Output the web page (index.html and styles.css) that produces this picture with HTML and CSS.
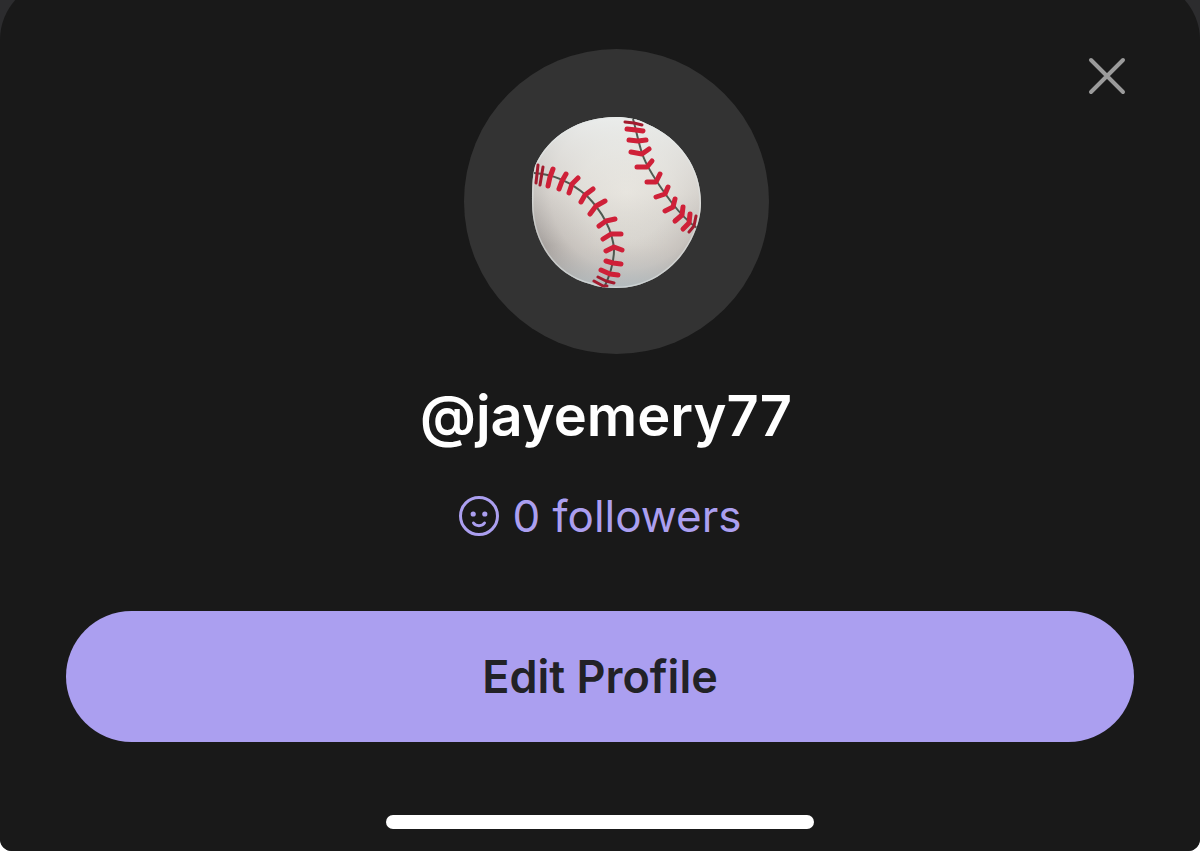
FILE: index.html
```html
<!DOCTYPE html>
<html lang="en">
<head>
    <title>@jayemery77</title>
    <meta charset="UTF-8">
    <meta name="viewport" content="width=device-width, initial-scale=1.0">
    <link rel="stylesheet" href="styles.css">
</head>

<body>
    <div class="backdrop">
        <main class="sheet">
            <button type="button" class="close" aria-label="Close">
                <svg width="40" height="40" viewBox="0 0 40 40" aria-hidden="true">
                    <path d="M4 4l32 32M36 4L4 36" />
                </svg>
            </button>

            <div class="avatar">
                <svg class="ball" viewBox="2 2 190 190" role="img" aria-label="Baseball">
                    <defs>
                        <radialGradient id="leather" cx="0.56" cy="0.44" r="0.6">
                            <stop offset="0" stop-color="#e6e3dc" />
                            <stop offset="0.45" stop-color="#dad7d1" />
                            <stop offset="0.75" stop-color="#c8c3be" />
                            <stop offset="1" stop-color="#a39e9b" />
                        </radialGradient>
                        <linearGradient id="shine" x1="0" y1="0" x2="0" y2="1">
                            <stop offset="0" stop-color="#eef1f0" stop-opacity="0.9" />
                            <stop offset="0.45" stop-color="#e9e7e2" stop-opacity="0.4" />
                            <stop offset="0.75" stop-color="#c8c5c2" stop-opacity="0" />
                            <stop offset="1" stop-color="#b4c0c5" stop-opacity="0.8" />
                        </linearGradient>
                        <clipPath id="ball-shape">
                            <path id="outline" d="M97 12C108 12 119 14 128 19C161 33 182 63 182 98C182 109 179 120 175 129C161 162 131 183 97 183C88 183 79 182 71 179C35 170 13 136 13 98C13 85 13 73 16 61C29 31 60 12 97 12Z" />
                        </clipPath>
                    </defs>
                    <use href="#outline" fill="url(#leather)" />
                    <use href="#outline" fill="url(#shine)" />
                    <g clip-path="url(#ball-shape)">
                        <use href="#outline" class="rim" />
                        <path class="seam" d="M15 68C36 69 54 79 68 91C82 105 94 125 95 145C95 158 91 170 85 183" />
                        <path class="seam" d="M114 14C117 24 119 36 123 48C128 64 141 82 153 98C160 107 168 116 178 123" />
                        <path class="stitch thin" d="M17 78L19 60M21 80L24 62M106 17L115 18L123 20M170 127L175 121L177 111M79 172L87 176L95 178M75 176L84 181L88 181" />
                        <path class="stitch" d="M29 81L31 72L34 64M40 84L43 76L47 69M50 88L53 79L59 73M62 97L66 90L74 84M71 109L77 101L86 96M80 121L87 116L96 114M84 134L92 129L102 129M87 146L95 142L103 145M87 156L94 158L102 159M82 165L91 169L99 170" />
                        <path class="stitch" d="M108 24L117 25L124 26M110 35L119 36L127 35M112 47L123 49L130 44M118 62L128 62L133 56M128 77L137 77L141 69M137 92L146 89L149 82M146 106L154 102L156 94M156 116L163 110L164 102M164 124L170 118L171 109" />
                    </g>
                </svg>
            </div>

            <h1 class="username">@jayemery77</h1>

            <a href="#followers" class="followers">
                <svg width="42" height="42" viewBox="0 0 42 42" aria-hidden="true">
                    <circle class="line" cx="21" cy="21" r="18.5" />
                    <circle class="eye" cx="15.2" cy="19" r="2.6" />
                    <circle class="eye" cx="26.8" cy="19" r="2.6" />
                    <path class="line" d="M15.5 28C18 31.5 24 31.5 26.5 28" />
                </svg>
                0 followers
            </a>

            <button type="button" class="edit">Edit Profile</button>
            <div class="home-indicator"></div>
        </main>
    </div>
</body>
</html>
```
FILE: styles.css
```css
:root {
    --sheet: #191919;
    --backdrop: #2c2c2e;
    --accent: #ab9ff0;
}

* {
    box-sizing: border-box;
}

body {
    margin: 0;
    background: white;
    font-family: Inter, sans-serif;
}

.backdrop {
    min-height: 100vh;
    background: var(--backdrop);
    border-radius: 0 0 12px 12px;
    overflow: hidden;
    display: flex;
}

/* the rounded top runs a little past the window edge */
.sheet {
    position: relative;
    flex: 1;
    margin-top: -20px;
    padding: 69px 66px 22px;
    background: var(--sheet);
    border-radius: 60px 60px 0 0;
    display: flex;
    flex-direction: column;
    align-items: center;
}

.close {
    position: absolute;
    top: 76px;
    right: 73px;
    padding: 0;
    border: none;
    background: none;
    cursor: pointer;
}

.close svg {
    display: block;
    fill: none;
    stroke: #9b9b9b;
    stroke-width: 4;
    stroke-linecap: round;
}

.avatar {
    width: 305px;
    height: 305px;
    margin-left: 32px;
    border-radius: 50%;
    background: #333333;
    display: flex;
    align-items: center;
    justify-content: center;
}

.ball {
    width: 190px;
    height: 190px;
}

.rim {
    fill: none;
    stroke: #e4e9ea;
    stroke-opacity: 0.5;
    stroke-width: 3;
}

.seam {
    fill: none;
    stroke: #2c3a30;
    stroke-width: 2;
    stroke-opacity: 0.8;
}

.stitch {
    fill: none;
    stroke: #cf2038;
    stroke-width: 5;
    stroke-linecap: round;
    stroke-linejoin: round;
}

.stitch.thin {
    stroke: #a31b2e;
    stroke-width: 3;
}

.username {
    margin: 26px 0 0;
    padding-left: 12px;
    color: white;
    font-size: 56px;
    font-weight: 600;
    line-height: 72px;
}

.followers {
    display: flex;
    align-items: center;
    gap: 12px;
    margin-top: 36px;
    color: var(--accent);
    font-size: 44px;
    line-height: 56px;
    text-decoration: none;
}

.followers .line {
    fill: none;
    stroke: currentColor;
    stroke-width: 3;
    stroke-linecap: round;
}

.followers .eye {
    fill: currentColor;
}

.edit {
    width: 100%;
    height: 131px;
    margin-top: 67px;
    border: none;
    border-radius: 66px;
    background: var(--accent);
    color: #222226;
    font-family: inherit;
    font-size: 45px;
    font-weight: 600;
    cursor: pointer;
}

.home-indicator {
    width: 40%;
    height: 14px;
    margin-top: auto;
    border-radius: 7px;
    background: white;
}
```
